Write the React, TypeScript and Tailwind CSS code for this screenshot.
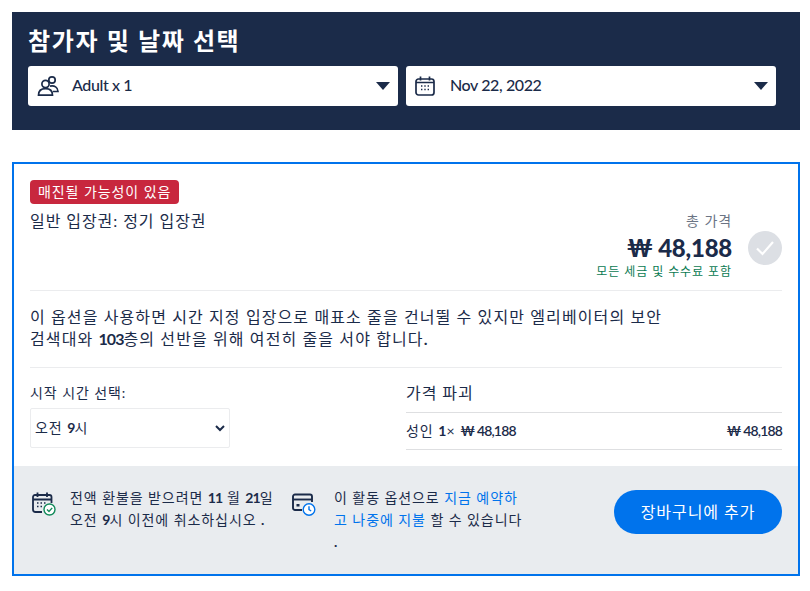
import React from 'react';

const Caret = () => (
    <svg width="14" height="8" viewBox="0 0 14 8" className="shrink-0">
        <path d="M0 0h14L7 8z" fill="#1b2b49" />
    </svg>
);

const PeopleIcon = () => (
    <svg width="22" height="22" viewBox="0 0 22 22" fill="none" stroke="#1b2b49" strokeWidth="1.7" className="shrink-0">
        <circle cx="8.5" cy="9" r="3.6" />
        <circle cx="15" cy="5" r="3.2" />
        <path d="M1.5 20.2c0-4.2 2.6-6.6 7-6.6s7 2.4 7 6.6z" />
        <path d="M13 11.2c4.6-.9 7.8 1 8 5.3h-5.2" />
    </svg>
);

const CalendarIcon = () => (
    <svg width="20" height="20" viewBox="0 0 20 20" fill="none" stroke="#1b2b49" strokeWidth="1.7" className="shrink-0">
        <rect x="1" y="3" width="18" height="16" rx="2.5" />
        <path d="M5.5 0.5v4M14.5 0.5v4M1 6.5h18" />
        <path d="M6 10h1.4M9.3 10h1.4M12.6 10h1.4M6 13.5h1.4M9.3 13.5h1.4M12.6 13.5h1.4" strokeWidth="1.4" />
    </svg>
);

const RefundIcon = () => (
    <svg width="24" height="24" viewBox="0 0 24 24" fill="none" className="shrink-0">
        <path d="M10 20H3.5A2.5 2.5 0 0 1 1 17.500V5a2 2 0 0 1 2-2h14.500a2 2 0 0 1 2 2v6" stroke="#1b2b49" strokeWidth="1.8" />
        <path d="M5.500 0.500v4.500M15 0.500v4.500M1 7.500h18" stroke="#1b2b49" strokeWidth="1.8" />
        <path d="M5 11h1.500M8.500 11H10M12 11h1.500M5 14.500h1.500M8.500 14.500H10" stroke="#1b2b49" strokeWidth="1.300" />
        <circle cx="17.500" cy="17.500" r="5.500" fill="#fff" stroke="#128a5a" strokeWidth="1.400" />
        <path d="M15 17.500l2 2 3.200-3.600" stroke="#128a5a" strokeWidth="1.400" />
    </svg>
);

const PayLaterIcon = () => (
    <svg width="24" height="24" viewBox="0 0 24 24" fill="none" className="shrink-0">
        <path d="M10 17H3a2 2 0 0 1-2-2V3.500a2 2 0 0 1 2-2h15a2 2 0 0 1 2 2V9" stroke="#1b2b49" strokeWidth="1.900" />
        <path d="M1 6.500h19" stroke="#1b2b49" strokeWidth="1.900" />
        <rect x="4.500" y="11" width="3" height="2.500" fill="#1b2b49" />
        <circle cx="17" cy="16.500" r="5.800" fill="#fff" stroke="#0073ec" strokeWidth="1.400" />
        <path d="M17 13.200v3.500l2.200 1.300" stroke="#0073ec" strokeWidth="1.400" />
    </svg>
);

const CheckCircle = () => (
    <div className="w-[34px] h-[34px] rounded-full bg-[#dcdfe4] flex items-center justify-center shrink-0">
        <svg width="20" height="16" viewBox="0 0 20 16" fill="none" stroke="#fff" strokeWidth="2.200">
            <path d="M2 8.500l5.500 5.500L18 2" />
        </svg>
    </div>
);

const Num: React.FC<{ children: React.ReactNode }> = ({ children }) => (
    <b className="font-bold tracking-[-0.06em]">{children}</b>
);

const Dropdown: React.FC<{ icon: React.ReactNode; label: string }> = ({ icon, label }) => (
    <div className="flex-1 h-10 bg-white rounded-[3px] flex items-center pl-[9px] pr-[8px]">
        <div className="w-[35px] flex items-center">{icon}</div>
        <span className="flex-1 text-base text-[#1b2b49] font-medium tracking-[-0.025em] pb-[2px]">{label}</span>
        <Caret />
    </div>
);

export default function App() {
    return (
        <div className="font-['Lato','Noto_Sans_CJK_KR',sans-serif] tracking-[0.058em] bg-white w-[810px] h-[591px] overflow-hidden pt-3 pl-3 text-[#1b2b49]">
            <div className="w-[788px] h-[118px] bg-[#1b2b49] px-4 pt-[13px]">
                <h2 className="text-2xl font-bold text-white leading-8 tracking-[0.069em]">참가자 및 날짜 선택</h2>
                <div className="flex gap-2 mt-[9px] w-[748px]">
                    <Dropdown icon={<PeopleIcon />} label="Adult x 1" />
                    <Dropdown icon={<CalendarIcon />} label="Nov 22, 2022" />
                </div>
            </div>

            <div className="w-[788px] h-[414px] mt-8 border-2 border-[#0073ec] flex flex-col">
                <div className="flex-1 px-4 pt-4">
                    <div className="relative border-b border-[#ebecee] h-[111px]">
                        <span className="flex w-fit items-center h-6 px-2 rounded bg-[#c8273e] text-white text-sm">매진될 가능성이 있음</span>
                        <div className="mt-[5px] text-base leading-6">일반 입장권: 정기 입장권</div>
                        <div className="absolute right-0 top-[31px] flex items-center gap-[16px]">
                            <div className="text-right">
                                <div className="text-sm text-[#6b7484] leading-5">총 가격</div>
                                <div className="text-2xl font-black leading-[30px] mt-[2px] tracking-[-0.01em]">₩ 48,188</div>
                                <div className="text-xs text-[#0a7a52] leading-4 mt-[1px]">모든 세금 및 수수료 포함</div>
                            </div>
                            <div className="pt-[4px]"><CheckCircle /></div>
                        </div>
                    </div>

                    <div className="border-b border-[#ebecee] h-[77px] pt-[15px] pr-[118px] text-base leading-[22px] tracking-[0.069em]">
                        이 옵션을 사용하면 시간 지정 입장으로 매표소 줄을 건너뛸 수 있지만 엘리베이터의 보안 검색대와 <Num>103</Num>층의 선반을 위해 여전히 줄을 서야 합니다<Num>.</Num>
                    </div>

                    <div className="flex pt-[15px]">
                        <div className="w-[376px]">
                            <div className="text-sm leading-5">시작 시간 선택:</div>
                            <div className="mt-[5px] w-[200px] h-10 border border-[#ebecee] rounded-[2px] flex items-center justify-between pl-1 pr-[4px] text-sm">
                                <span>오전 <Num>9</Num>시</span>
                                <svg width="10" height="7" viewBox="0 0 10 7" fill="none" stroke="#1b2b49" strokeWidth="2">
                                    <path d="M1 1l4 4 4-4" />
                                </svg>
                            </div>
                        </div>
                        <div className="flex-1">
                            <div className="text-base leading-5 h-[29px]">가격 파괴</div>
                            <div className="border-y border-[#dedfe1] h-[38px] flex items-center justify-between text-sm">
                                <span>성인 <b className="font-bold tracking-[-0.3em]">1</b> × <b className="font-semibold tracking-[-0.06em]">₩ 48,188</b></span>
                                <span className="font-semibold tracking-[-0.06em]">₩ 48,188</span>
                            </div>
                        </div>
                    </div>
                </div>

                <div className="h-[108px] bg-[#e9ecef] flex items-start pl-[18px] pr-4 pt-6">
                    <div className="w-[38px] pt-[2px]"><RefundIcon /></div>
                    <div className="w-[222px] text-sm leading-[22px] -mt-[3px] pr-[14px]">
                        전액 환불을 받으려면 <Num>11</Num> 월 <Num>21</Num>일 오전 <Num>9</Num>시 이전에 취소하십시오 <Num>.</Num>
                    </div>
                    <div className="w-[42px] pt-[3px]"><PayLaterIcon /></div>
                    <div className="w-[192px] text-sm leading-[22px] -mt-[3px] break-all">
                        이 활동 옵션으로 <span className="text-[#0073ec]">지금 예약하고 나중에 지불</span> 할 수 있습니다<br />
                        <Num>.</Num>
                    </div>
                    <button className="ml-auto w-[168px] h-11 rounded-full bg-[#0073ec] text-white text-base">장바구니에 추가</button>
                </div>
            </div>
        </div>
    );
}
